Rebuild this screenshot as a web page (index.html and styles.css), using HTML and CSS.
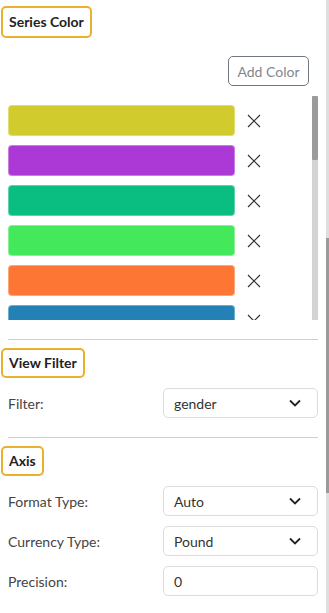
FILE: index.html
```html
<!DOCTYPE html>
<html lang="en">
<head>
    <meta charset="UTF-8">
    <meta name="viewport" content="width=device-width, initial-scale=1.0">
    <title>Chart Properties</title>
    <link rel="stylesheet" href="styles.css">
</head>
<body>
    <div id="page">
        <div id="panel">
            <div class="section-title first">Series Color</div>

            <div class="add-row">
                <button class="add-btn">Add Color</button>
            </div>

            <div class="color-box">
                <div class="color-list">
                    <div class="color-row"><div class="swatch" style="background-color: #d1cb2d"></div><span class="remove"></span></div>
                    <div class="color-row"><div class="swatch" style="background-color: #ac38d5"></div><span class="remove"></span></div>
                    <div class="color-row"><div class="swatch" style="background-color: #0abd80"></div><span class="remove"></span></div>
                    <div class="color-row"><div class="swatch" style="background-color: #44e95b"></div><span class="remove"></span></div>
                    <div class="color-row"><div class="swatch" style="background-color: #fe7633"></div><span class="remove"></span></div>
                    <div class="color-row"><div class="swatch" style="background-color: #2381b5"></div><span class="remove"></span></div>
                </div>
                <div class="list-track"><div class="list-thumb"></div></div>
            </div>

            <div class="divider"></div>

            <div class="section-title">View Filter</div>
            <div class="form-row">
                <label>Filter:</label>
                <div class="select">gender<span class="chevron"></span></div>
            </div>

            <div class="divider"></div>

            <div class="section-title">Axis</div>
            <div class="form-row">
                <label>Format Type:</label>
                <div class="select">Auto<span class="chevron"></span></div>
            </div>
            <div class="form-row">
                <label>Currency Type:</label>
                <div class="select">Pound<span class="chevron"></span></div>
            </div>
            <div class="form-row">
                <label>Precision:</label>
                <div class="select">0</div>
            </div>
        </div>
        <div class="page-track"><div class="page-thumb"></div></div>
    </div>

    <script>
        const closeIcon = '<svg width="14" height="14" viewBox="0 0 14 14"><path d="M1 1L13 13M13 1L1 13" stroke="#333" stroke-width="1.2" fill="none"/></svg>';
        const chevronIcon = '<svg width="12" height="8" viewBox="0 0 12 8"><path d="M1 1.5L6 6.5L11 1.5" stroke="#222" stroke-width="1.8" fill="none"/></svg>';

        document.querySelectorAll('.remove').forEach(el => {
            el.innerHTML = closeIcon;
        });
        document.querySelectorAll('.chevron').forEach(el => {
            el.innerHTML = chevronIcon;
        });
    </script>
</body>
</html>
```

FILE: styles.css
```css
body {
  font-family: Lato, "Open Sans", sans-serif;
  background-color: #fff;
  color: #333;
  margin: 0;
  padding: 0;
}

#page {
  display: flex;
  width: 329px;
  height: 613px;
  overflow: hidden;
}

#panel {
  width: 326px;
  box-sizing: border-box;
  padding: 0 8px 0 8px;
}

.page-track {
  width: 3px;
  height: 613px;
  background-color: #dedede;
}

.page-thumb {
  margin-top: 238px;
  height: 255px;
  background-color: #9a9a9a;
}

.section-title {
  display: inline-block;
  margin: 8px 0 0 -7px;
  height: 30px;
  line-height: 26px;
  padding: 0 6px 0 6px;
  border: 2px solid #eab12f;
  border-radius: 5px;
  box-sizing: border-box;
  font-size: 14px;
  font-weight: bold;
  color: #222;
}

.section-title.first {
  margin-top: 6px;
  height: 32px;
  line-height: 28px;
}

.add-row {
  display: flex;
  justify-content: flex-end;
  margin-top: 18px;
  padding-right: 9px;
}

.add-btn {
  height: 30px;
  width: 81px;
  background-color: #fff;
  border: 1px solid #707780;
  border-radius: 5px;
  color: #82878d;
  font-family: inherit;
  font-size: 14px;
  padding: 0;
  cursor: pointer;
}

.color-box {
  display: flex;
  justify-content: space-between;
  margin-top: 10px;
  height: 224px;
}

.color-list {
  height: 224px;
  overflow: hidden;
  padding-top: 9px;
  box-sizing: border-box;
}

.color-row {
  display: flex;
  align-items: center;
  margin-bottom: 9px;
}

.swatch {
  width: 227px;
  height: 31px;
  border-radius: 4px;
  box-sizing: border-box;
  border: 1px solid rgba(255, 255, 255, 0.35);
}

.remove {
  display: flex;
  margin-left: 12px;
  width: 14px;
  height: 14px;
}

.list-track {
  width: 6px;
  height: 224px;
  background-color: #d4d4d4;
}

.list-thumb {
  height: 64px;
  background-color: #9b9b9b;
  border-radius: 1px;
}

.divider {
  height: 1px;
  background-color: #cfcfcf;
  margin-top: 19px;
}

.form-row {
  display: flex;
  align-items: center;
  justify-content: space-between;
  margin-top: 10px;
}

.form-row label {
  font-size: 14px;
  color: #444;
}

.select {
  display: flex;
  align-items: center;
  justify-content: space-between;
  width: 155px;
  height: 30px;
  box-sizing: border-box;
  padding: 0 16px 0 10px;
  border: 1px solid #dcdcdc;
  border-radius: 5px;
  font-size: 14px;
  color: #333;
}

.chevron {
  display: flex;
}
```
